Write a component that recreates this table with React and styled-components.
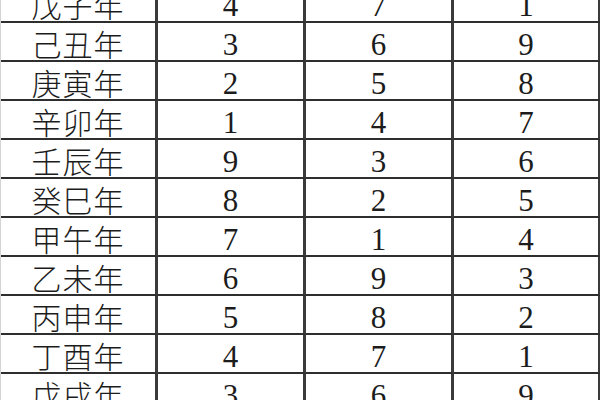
import React from 'react';
import styled, { createGlobalStyle } from 'styled-components';

const rows = [
  ['戊子年', 4, 7, 1],
  ['己丑年', 3, 6, 9],
  ['庚寅年', 2, 5, 8],
  ['辛卯年', 1, 4, 7],
  ['壬辰年', 9, 3, 6],
  ['癸巳年', 8, 2, 5],
  ['甲午年', 7, 1, 4],
  ['乙未年', 6, 9, 3],
  ['丙申年', 5, 8, 2],
  ['丁酉年', 4, 7, 1],
  ['戊戌年', 3, 6, 9],
];

const GlobalStyle = createGlobalStyle`
  html, body {
    margin: 0;
    padding: 0;
    background: #ffffff;
    overflow: hidden;
  }
`;

const Page = styled.div`
  width: 600px;
  height: 400px;
  overflow: hidden;
  background: #fff;
`;

const Table = styled.div`
  display: grid;
  grid-template-columns: 157px 148px 148px 147px;
  grid-auto-rows: 39px;
  margin-top: -16px;
  border-left: 1px solid #d4d4d4;
`;

const Cell = styled.div`
  box-sizing: border-box;
  display: flex;
  align-items: center;
  justify-content: center;
  border-right: 3px solid #3a3a3a;
  border-bottom: 2px solid #2e2e2e;
  color: #1c1c1c;
  font-family: ${(p) =>
    p.$year
      ? '"Noto Sans CJK SC", "Noto Sans", sans-serif'
      : '"Liberation Serif", "DejaVu Serif", serif'};
  font-size: ${(p) => (p.$year ? '30px' : '31px')};
  font-weight: ${(p) => (p.$year ? 300 : 400)};
  letter-spacing: ${(p) => (p.$year ? '1px' : '0')};
  padding-top: ${(p) => (p.$year ? '2px' : '5px')};
  line-height: 1;
`;

export default function App() {
  return (
    <Page>
      <GlobalStyle />
      <Table>
        {rows.map(([year, a, b, c]) => (
          <React.Fragment key={year + a + b + c}>
            <Cell $year>{year}</Cell>
            <Cell>{a}</Cell>
            <Cell>{b}</Cell>
            <Cell>{c}</Cell>
          </React.Fragment>
        ))}
      </Table>
    </Page>
  );
}
